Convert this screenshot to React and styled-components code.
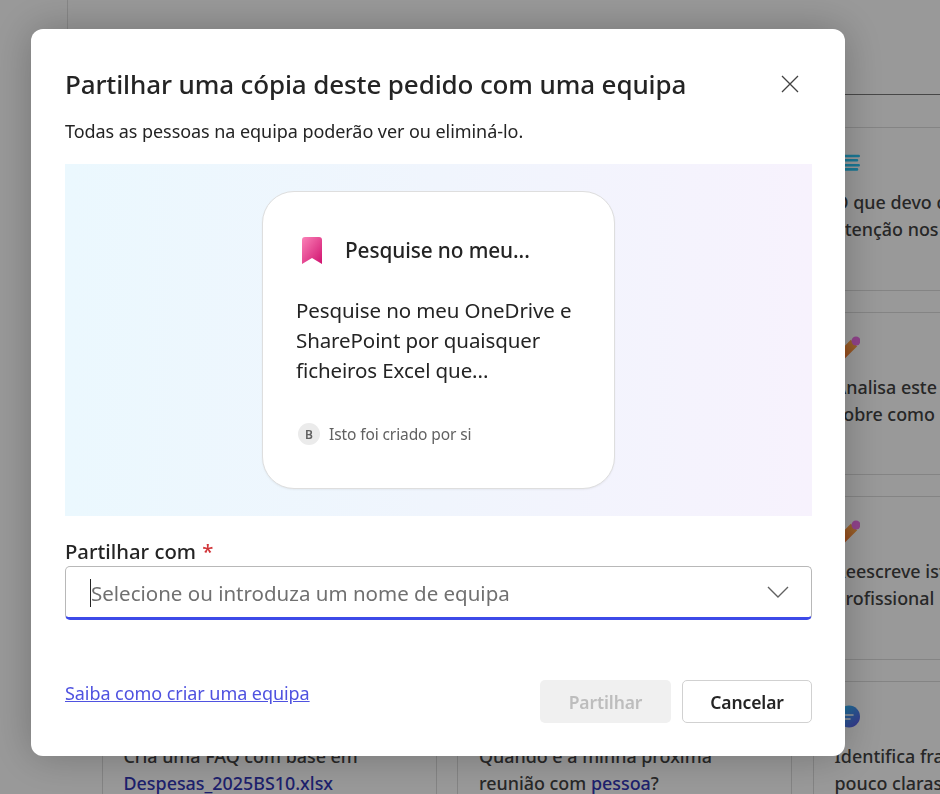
import React from 'react';
import styled, { createGlobalStyle } from 'styled-components';

const Global = createGlobalStyle`
  html, body { margin: 0; padding: 0; height: 100%; overflow: hidden; background: #fff; }
  * { box-sizing: border-box; }
  body { font-family: "Noto Sans", "Open Sans", "Liberation Sans", sans-serif; }
`;

const Page = styled.div`
  width: 940px; height: 794px; overflow: hidden; display: flex; background: #fff;
`;
const Rail = styled.div`
  width: 68px; height: 400px; flex: none; border-right: 1px solid #e0e0e0;
`;
const Main = styled.div`
  flex: 1; min-width: 0; display: flex; flex-direction: column;
`;
const TabLine = styled.div`
  height: 95px; flex: none; border-bottom: 1px solid #777;
`;
const Grid = styled.div`
  width: 1100px; padding: 32px 0 0 33.5px; display: grid;
  grid-template-columns: repeat(3, 335px); column-gap: 20.5px; row-gap: 21px;
  grid-auto-rows: 163.67px; align-content: start;
`;
const Card = styled.div`
  border: 1px solid #dcdcdc; padding: 23px 21px; display: flex; flex-direction: column;
`;
const CardIcon = styled.div`
  height: 24px; margin-bottom: 14px; margin-left: 1px; display: flex; align-items: center;
`;
const CardText = styled.div`
  font-size: 17.9px; line-height: 27px; font-weight: 500; color: #424242; white-space: nowrap;
`;
const Ref = styled.span`
  color: #3236b5;
`;

const Overlay = styled.div`
  position: fixed; inset: 0; background: rgba(0,0,0,.4); padding: 29px 0 0 31px;
`;
const Dialog = styled.div`
  width: 814px; height: 727px; background: #fff; border-radius: 12px;
  box-shadow: 0 0 40px rgba(0,0,0,.25);
  padding: 34px 33px 33px 34px; display: flex; flex-direction: column;
`;
const Header = styled.div`
  display: flex; align-items: center; justify-content: space-between; height: 42px;
`;
const Title = styled.h1`
  margin: 0; font-size: 26px; line-height: 42px; font-weight: 500; color: #242424; letter-spacing: -0.12px;
`;
const Close = styled.button`
  border: 0; background: none; padding: 0; width: 20px; height: 20px; margin-right: 12px; display: flex;
  align-items: center; justify-content: center; color: #424242;
`;
const Sub = styled.p`
  margin: 12px 0 19px; font-size: 18px; line-height: 28px; color: #242424; letter-spacing: -0.06px;
`;
const Hero = styled.div`
  height: 352px; flex: none; display: flex; align-items: center; justify-content: center;
  background: linear-gradient(90deg, #ebf8fe 0%, #f0f5fd 50%, #f7f2fd 100%);
`;
const PromptCard = styled.div`
  width: 353px; height: 298px; background: #fff; border: 1px solid #dedede; border-radius: 32px;
  padding: 40px 33px 0; display: flex; flex-direction: column;
  box-shadow: 0 1px 2px rgba(0,0,0,.05);
`;
const PromptHead = styled.div`
  display: flex; align-items: center; gap: 23px; height: 36px; padding-left: 6px;
`;
const PromptTitle = styled.div`
  font-size: 20.8px; font-weight: 500; color: #242424; letter-spacing: -0.1px;
`;
const PromptBody = styled.div`
  margin-top: 27px; font-size: 20.5px; line-height: 30px; color: #242424; letter-spacing: -0.1px;
`;
const Author = styled.div`
  margin-top: 38px; display: flex; align-items: center; gap: 9px; color: #616161;
  font-size: 15.5px; letter-spacing: -0.1px; padding-left: 2px;
`;
const Avatar = styled.span`
  width: 22px; height: 22px; border-radius: 50%; background: #ebebeb; display: flex;
  align-items: center; justify-content: center; font-size: 12px; font-weight: 600; color: #616161;
`;
const Label = styled.label`
  margin: 22px 0 2px; font-size: 20.3px; line-height: 26px; font-weight: 500; color: #242424;
`;
const Req = styled.span`
  color: #d13438; margin-left: 1px;
`;
const Combo = styled.div`
  height: 54px; flex: none; border: 1px solid #b8b8b8; border-bottom: 3px solid #3d4ae8; border-radius: 5px;
  display: flex; align-items: center; justify-content: space-between; padding: 0 22px 0 24px;
`;
const Placeholder = styled.div`
  font-size: 20.5px; color: #707070; border-left: 1px solid #242424; line-height: 28px; margin-top: 1px;
`;
const Footer = styled.div`
  margin-top: auto; display: flex; align-items: flex-start; justify-content: space-between;
`;
const Learn = styled.a`
  font-size: 18px; line-height: 28px; color: #4f52e0; text-decoration: underline; margin-top: -1px; letter-spacing: -0.06px;
`;
const Actions = styled.div`
  display: flex; gap: 11px;
`;
const Button = styled.button`
  height: 43px; border-radius: 5px; font-family: inherit; font-size: 17.5px; font-weight: 600; letter-spacing: -0.1px;
  width: ${p => p.$w}px;
  background: ${p => (p.$off ? '#f0f0f0' : '#fff')};
  color: ${p => (p.$off ? '#bdbdbd' : '#242424')};
  border: ${p => (p.$off ? '0' : '1px solid #d1d1d1')};
`;

const Lines = () => (
  <svg width="24" height="24" viewBox="0 0 24 24">
    <g stroke="#2bc8f8" strokeWidth="2.6" strokeLinecap="round" fill="none">
      <path d="M4 5h18.7M4 9.2h17M4 14.3h18.7M4 18.4h17" />
    </g>
  </svg>
);
const Pencil = ({ id }) => (
  <svg width="24" height="24" viewBox="0 0 24 24">
    <defs>
      <linearGradient id={id} gradientUnits="userSpaceOnUse" x1="3" y1="22" x2="19" y2="6">
        <stop offset="0" stopColor="#f56a28" />
        <stop offset="1" stopColor="#ffab4a" />
      </linearGradient>
    </defs>
    <path d="M18 7L2 23" stroke={`url(#${id})`} strokeWidth="9" fill="none" />
    <circle cx="20" cy="5" r="4.5" fill="#f070e8" />
  </svg>
);
const Bubble = () => (
  <svg width="24" height="24" viewBox="0 0 24 24">
    <defs>
      <linearGradient id="bub" x1="0" y1="0" x2="1" y2="1">
        <stop offset="0" stopColor="#2ad0ff" />
        <stop offset="1" stopColor="#6050e8" />
      </linearGradient>
    </defs>
    <circle cx="13" cy="11.5" r="11" fill="url(#bub)" />
    <path d="M8 10h9M8 14h6" stroke="#fff" strokeWidth="1.6" strokeLinecap="round" />
  </svg>
);

const cards = [
  { icon: null, text: '' },
  { icon: null, text: '' },
  { icon: <Lines />, text: <>O que devo dar<br />atenção nos</> },
  { icon: null, text: '' },
  { icon: null, text: '' },
  { icon: <Pencil id="p1" />, text: <>Analisa este<br />sobre como</> },
  { icon: null, text: '' },
  { icon: null, text: '' },
  { icon: <Pencil id="p2" />, text: <>Reescreve isto<br />profissional</> },
  { icon: null, text: <>Cria uma FAQ com base em<br /><Ref>Despesas_2025BS10.xlsx</Ref></> },
  { icon: null, text: <>Quando é a minha próxima<br />reunião com <Ref>pessoa</Ref>?</> },
  { icon: <Bubble />, text: <>Identifica frases<br />pouco claras</> },
];

export default function App() {
  return (
    <>
      <Global />
      <Page>
        <Rail />
        <Main>
          <TabLine />
          <Grid>
            {cards.map((c, i) => (
              <Card key={i}>
                <CardIcon>{c.icon}</CardIcon>
                <CardText>{c.text}</CardText>
              </Card>
            ))}
          </Grid>
        </Main>
      </Page>
      <Overlay>
        <Dialog>
          <Header>
            <Title>Partilhar uma cópia deste pedido com uma equipa</Title>
            <Close aria-label="Fechar">
              <svg width="18" height="18" viewBox="0 0 18 18">
                <path d="M1 1l16 16M17 1L1 17" stroke="currentColor" strokeWidth="1.3" fill="none" />
              </svg>
            </Close>
          </Header>
          <Sub>Todas as pessoas na equipa poderão ver ou eliminá-lo.</Sub>
          <Hero>
            <PromptCard>
              <PromptHead>
                <svg width="20" height="27" viewBox="0 0 20 27">
                  <defs>
                    <linearGradient id="bm" x1="0" y1="0" x2="1" y2="1">
                      <stop offset="0" stopColor="#fb82b8" />
                      <stop offset="1" stopColor="#d0126f" />
                    </linearGradient>
                  </defs>
                  <path d="M3 0h14a3 3 0 0 1 3 3v24l-10-6-10 6V3a3 3 0 0 1 3-3z" fill="url(#bm)" />
                </svg>
                <PromptTitle>Pesquise no meu...</PromptTitle>
              </PromptHead>
              <PromptBody>
                Pesquise no meu OneDrive e<br />SharePoint por quaisquer<br />ficheiros Excel que...
              </PromptBody>
              <Author>
                <Avatar>B</Avatar>
                Isto foi criado por si
              </Author>
            </PromptCard>
          </Hero>
          <Label>Partilhar com <Req>*</Req></Label>
          <Combo>
            <Placeholder>Selecione ou introduza um nome de equipa</Placeholder>
            <svg width="22" height="13" viewBox="0 0 22 13">
              <path d="M1 1l10 10L21 1" stroke="#616161" strokeWidth="1.4" fill="none" />
            </svg>
          </Combo>
          <Footer>
            <Learn href="#">Saiba como criar uma equipa</Learn>
            <Actions>
              <Button $off $w={131} disabled>Partilhar</Button>
              <Button $w={130}>Cancelar</Button>
            </Actions>
          </Footer>
        </Dialog>
      </Overlay>
    </>
  );
}
